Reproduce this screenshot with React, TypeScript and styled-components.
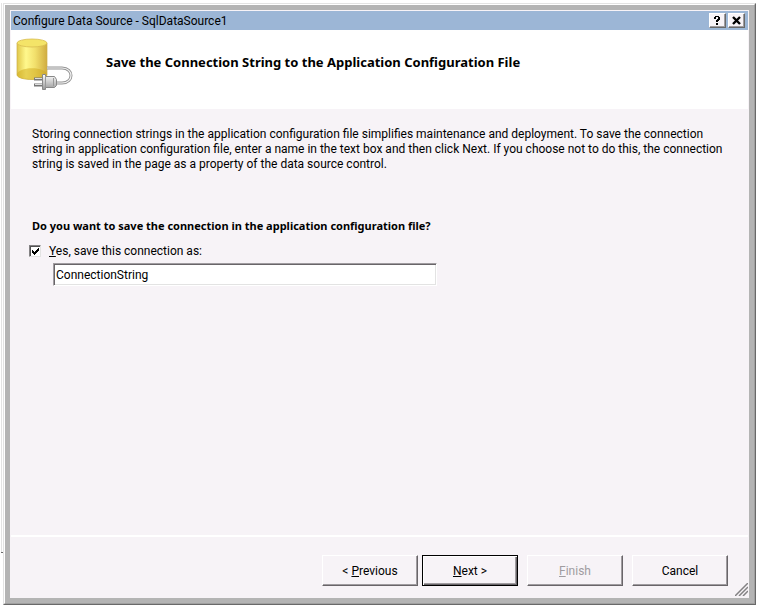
import React from "react";
import styled, { createGlobalStyle, css } from "styled-components";

const Global = createGlobalStyle`
  * { box-sizing: border-box; }
  html, body, #root { height: 100%; }
  body { margin: 0; background: #fff; overflow: hidden; }
  body, button, input { font-family: Roboto, "Noto Sans", sans-serif; font-size: 12px; color: #000; }
`;

const Page = styled.div`
  display: flex;
  height: 100%;
  padding: 3px 4px 2px 3px;
  position: relative;
`;

const BackWindowEdge = styled.div`
  position: absolute;
  left: 1px;
  top: 3px;
  bottom: 54px;
  width: 1px;
  background: #e3e3e3;
  &::after {
    content: "";
    position: absolute;
    left: 0;
    bottom: 0;
    width: 2px;
    height: 1px;
    background: #696969;
  }
`;

const Frame = styled.div`
  flex: 1;
  min-width: 0;
  display: flex;
  border: 1px solid;
  border-color: #e3e3e3 #696969 #696969 #e3e3e3;
`;

const FrameFace = styled.div`
  flex: 1;
  min-width: 0;
  display: flex;
  border: 1px solid;
  border-color: #fff #a0a0a0 #a0a0a0 #fff;
  background: #b4b4b4;
  padding: 5px;
`;

const Dialog = styled.main`
  flex: 1;
  min-width: 0;
  display: flex;
  flex-direction: column;
  background: #f7f3f7;
  padding: 1px;
`;

const TitleBar = styled.header`
  display: flex;
  align-items: center;
  gap: 2px;
  height: 19px;
  padding: 0 3px 0 2px;
  background: #9cb6d6;
`;

const Title = styled.h1`
  flex: 1;
  margin: 0;
  font-size: 12px;
  line-height: 18px;
  font-weight: 400;
`;

const CaptionButton = styled.button`
  display: grid;
  place-items: center;
  width: 17px;
  height: 15px;
  padding: 0 1px 1px 0;
  border: 1px solid;
  border-color: #fff #696969 #696969 #fff;
  box-shadow: inset -1px -1px #a09ca0;
  background: #f7f3f7;
`;

const Banner = styled.section`
  display: flex;
  gap: 32px;
  height: 79px;
  padding: 8px 4px;
  background: #fff;
`;

const Heading = styled.h2`
  margin: 14px 0 0;
  font-family: "Noto Sans", sans-serif;
  font-size: 13px;
  line-height: 20px;
  font-weight: 700;
  white-space: nowrap;
`;

const Body = styled.section`
  flex: 1;
  padding: 18px;
`;

const Description = styled.p`
  margin: 0 0 46px 3px;
  line-height: 15px;
`;

const Line = styled.span`
  display: block;
  white-space: nowrap;
`;

const Question = styled.p`
  margin: 0 0 9px 3px;
  font-family: "Noto Sans", sans-serif;
  font-size: 11px;
  line-height: 15px;
  font-weight: 700;
`;

const CheckLabel = styled.label`
  display: flex;
  align-items: center;
  gap: 8px;
  line-height: 18px;
`;

const Tick = styled.input`
  appearance: none;
  width: 12px;
  height: 12px;
  margin: 0;
  border: 1px solid;
  border-color: #848284 #e3e3e3 #e3e3e3 #848284;
  box-shadow: inset 1px 1px #525152;
  background: #fff;
  &:checked {
    background: #fff url("data:image/svg+xml,%3Csvg xmlns='http://www.w3.org/2000/svg' viewBox='0 0 10 10' shape-rendering='crispEdges'%3E%3Cpath d='M2 4h1v1h1v1h1v-1h1v-1h1v-1h1v-1h1v3h-1v1h-1v1h-1v1h-1v1h-1v-1h-1v-1h-1z'/%3E%3C/svg%3E") center / 10px 10px;
  }
`;

const NameInput = styled.input`
  display: block;
  width: 384px;
  max-width: calc(100% - 24px);
  height: 23px;
  margin: 3px 0 0 24px;
  padding: 0 2px;
  border: 1px solid;
  border-color: #a09ca0 #fff #fff #a09ca0;
  box-shadow: inset 1px 1px #696569, inset -1px -1px #e3e3e3;
  background: #fff;
  outline: none;
`;

const Footer = styled.footer`
  position: relative;
  display: flex;
  justify-content: flex-end;
  height: 62px;
  padding: 18px 20px 0;
  border-top: 2px solid #fff;
`;

const WizardButton = styled.button<{ $primary?: boolean; $spaced?: boolean }>`
  width: 96px;
  height: 31px;
  margin-left: ${(p) => (p.$spaced ? 9 : 4)}px;
  padding: 0;
  border: 1px solid;
  border-color: #fff #696569 #696569 #fff;
  box-shadow: inset -1px -1px #a09ca0;
  background: #f7f3f7;
  &:disabled { color: #a09ca0; }
  ${(p) =>
    p.$primary &&
    css`
      border-color: #000;
      box-shadow: inset 1px 1px #fff, inset -1px -1px #696569, inset -2px -2px #a09ca0;
    `}
`;

const Grip = styled.svg`
  position: absolute;
  right: 0;
  bottom: 1px;
`;

function DataSourceIcon() {
  return (
    <svg width="59" height="54" viewBox="0 0 59 54" aria-hidden="true">
      <defs>
        <linearGradient id="side">
          <stop offset="0" stopColor="#e0c74a" />
          <stop offset=".3" stopColor="#fff88c" />
          <stop offset=".6" stopColor="#f2e06c" />
          <stop offset="1" stopColor="#d0ac40" />
        </linearGradient>
        <linearGradient id="plug" x2="0" y2="1">
          <stop offset="0" stopColor="#fff" />
          <stop offset="1" stopColor="#999" />
        </linearGradient>
      </defs>
      <path d="M2 5v32c1 6 29 6 30 0V5z" fill="url(#side)" stroke="#cdb04a" strokeWidth=".7" />
      <path d="M2 37c0-9 30-9 30 0c-1 6-29 6-30 0z" fill="#d0aa1c" opacity=".5" />
      <ellipse cx="17" cy="5" rx="15" ry="4" fill="#f4e468" stroke="#d8bc50" strokeWidth=".8" />
      <path d="M32 30h15c12 0 12 15 0 15h-7" fill="none" stroke="#949494" strokeWidth="3" />
      <path d="M32 30h15c12 0 12 15 0 15h-7" fill="none" stroke="#f4f4f4" strokeWidth="1.2" />
      <path d="M19 41h9M19 47h9" stroke="#777" strokeWidth="3" />
      <path d="M20 40.5h8M20 46.5h8" stroke="#ddd" />
      <path d="M27.5 36.5h3v2h9l2 3v6l-2 2h-9v2h-3z" fill="url(#plug)" stroke="#888" />
      <path d="M30.5 39v10M38.5 40v8" stroke="#999" />
    </svg>
  );
}

export default function App() {
  return (
    <>
      <Global />
      <Page>
        <BackWindowEdge />
        <Frame>
          <FrameFace>
            <Dialog>
              <TitleBar>
                <Title>Configure Data Source - SqlDataSource1</Title>
                <CaptionButton aria-label="Help">
                  <svg width="6" height="9" viewBox="0 0 6 9" shapeRendering="crispEdges">
                    <path d="M1 0h4v1h1v3h-1v1h-1v1h-2v-2h1v-1h1v-2h-2v2h-2v-2h1zM2 7h2v2h-2z" />
                  </svg>
                </CaptionButton>
                <CaptionButton aria-label="Close">
                  <svg width="9" height="9" viewBox="0 0 9 9">
                    <path d="M1 1l7 7M8 1L1 8" stroke="#000" strokeWidth="2.4" />
                  </svg>
                </CaptionButton>
              </TitleBar>
              <Banner>
                <DataSourceIcon />
                <Heading>Save the Connection String to the Application Configuration File</Heading>
              </Banner>
              <Body>
                <Description>
                  <Line>Storing connection strings in the application configuration file simplifies maintenance and deployment. To save the connection</Line>
                  <Line>string in application configuration file, enter a name in the text box and then click Next. If you choose not to do this, the connection</Line>
                  <Line>string is saved in the page as a property of the data source control.</Line>
                </Description>
                <Question>Do you want to save the connection in the application configuration file?</Question>
                <CheckLabel>
                  <Tick type="checkbox" defaultChecked />
                  <span><u>Y</u>es, save this connection as:</span>
                </CheckLabel>
                <NameInput aria-label="Connection name" defaultValue="ConnectionString" />
              </Body>
              <Footer>
                <WizardButton>&lt; <u>P</u>revious</WizardButton>
                <WizardButton $primary><u>N</u>ext &gt;</WizardButton>
                <WizardButton $spaced disabled><u>F</u>inish</WizardButton>
                <WizardButton $spaced>Cancel</WizardButton>
                <Grip width="13" height="13" viewBox="0 0 13 13" aria-hidden="true">
                  <path d="M0 13L13 0M4 13l9-9M8 13l5-5" stroke="#848284" strokeWidth="1.5" />
                </Grip>
              </Footer>
            </Dialog>
          </FrameFace>
        </Frame>
      </Page>
    </>
  );
}
